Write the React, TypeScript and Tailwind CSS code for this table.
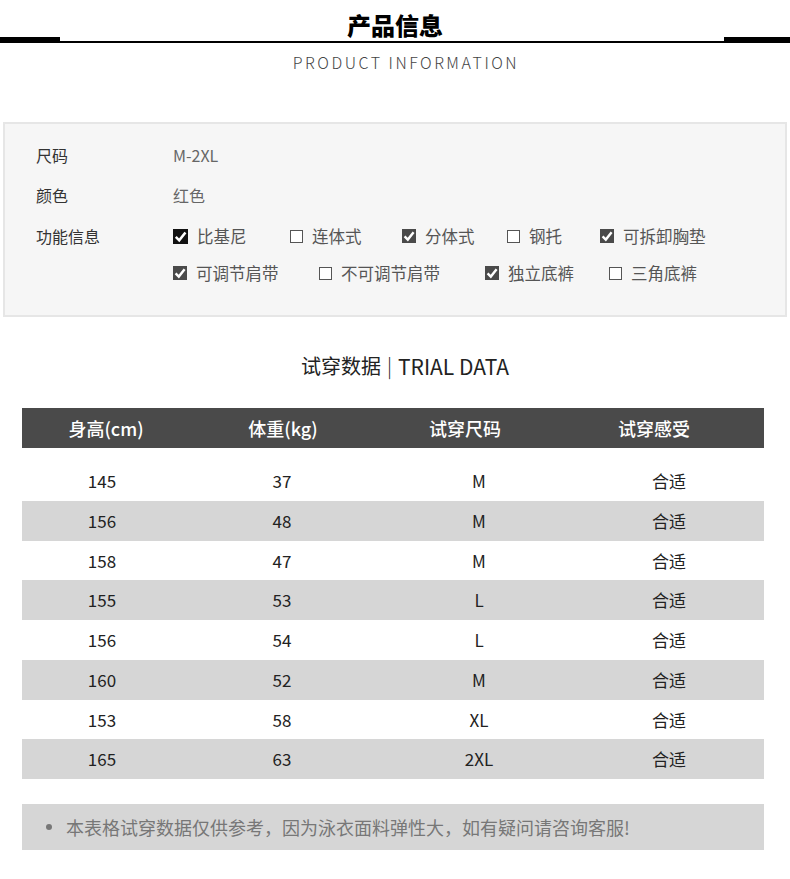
import React from "react";

const font = { fontFamily: '"Noto Sans CJK SC", "Noto Sans", sans-serif' };

type Opt = { label: string; checked: boolean; w: string; dark?: boolean };

const row1: Opt[] = [
  { label: "比基尼", checked: true, w: "w-[117px]", dark: true },
  { label: "连体式", checked: false, w: "w-[112px]" },
  { label: "分体式", checked: true, w: "w-[105px]" },
  { label: "钢托", checked: false, w: "w-[93px]" },
  { label: "可拆卸胸垫", checked: true, w: "w-[120px]" },
];

const row2: Opt[] = [
  { label: "可调节肩带", checked: true, w: "w-[146px]" },
  { label: "不可调节肩带", checked: false, w: "w-[166px]" },
  { label: "独立底裤", checked: true, w: "w-[124px]" },
  { label: "三角底裤", checked: false, w: "w-[110px]" },
];

const rows = [
  ["145", "37", "M", "合适"],
  ["156", "48", "M", "合适"],
  ["158", "47", "M", "合适"],
  ["155", "53", "L", "合适"],
  ["156", "54", "L", "合适"],
  ["160", "52", "M", "合适"],
  ["153", "58", "XL", "合适"],
  ["165", "63", "2XL", "合适"],
];

const Box = ({ checked, dark }: { checked: boolean; dark?: boolean }) =>
  checked ? (
    <svg width={dark ? 15 : 14} height={dark ? 15 : 14} viewBox="0 0 14 14">
      <rect width="14" height="14" fill={dark ? "#111" : "#4a4a4a"} />
      <path d="M2.6 7.4 L5.8 10.6 L11.6 3.2" fill="none" stroke="#fff" strokeWidth="2.4" />
    </svg>
  ) : (
    <span className="block w-[13px] h-[13px] border border-[#555] bg-white" />
  );

const Options = ({ items }: { items: Opt[] }) => (
  <div className="flex items-center h-[24px]">
    {items.map((o) => (
      <div key={o.label} className={`flex items-center shrink-0 ${o.w}`}>
        <Box checked={o.checked} dark={o.dark} />
        <span className="ml-[9px] text-[16.5px] text-[#555] leading-[24px]">{o.label}</span>
      </div>
    ))}
  </div>
);

export default function App() {
  return (
    <div style={font} className="w-[790px] h-[879px] bg-white overflow-hidden">
      <div className="pt-[12px] text-center text-[24px] leading-[25px] font-black text-black">产品信息</div>
      <div className="flex items-end h-[6px]">
        <div className="w-[60px] h-[6px] bg-black" />
        <div className="flex-1 h-[2px] bg-black" />
        <div className="w-[66px] h-[6px] bg-black" />
      </div>
      <div className="mt-[9px] h-[20px] pl-[22px] text-center text-[16px] leading-[20px] tracking-[2.5px] text-[#444] font-light">
        PRODUCT INFORMATION
      </div>

      <div className="mt-[50px] mx-[3px] h-[195px] border-2 border-[#e6e6e6] bg-[#f6f6f6] pt-[19px] pl-[31px] text-[16px] text-[#333]">
        <div className="flex h-[24px] leading-[24px] mb-[16px]">
          <div className="w-[137px]">尺码</div>
          <div className="text-[#666]">M-2XL</div>
        </div>
        <div className="flex h-[24px] leading-[24px] mb-[17px]">
          <div className="w-[137px]">颜色</div>
          <div className="text-[#666]">红色</div>
        </div>
        <div className="flex">
          <div className="w-[137px] leading-[24px]">功能信息</div>
          <div className="flex flex-col gap-[13px]">
            <Options items={row1} />
            <Options items={row2} />
          </div>
        </div>
      </div>

      <div className="mt-[35px] h-[28px] pl-[20px] flex justify-center items-center text-[20px] leading-[28px] text-[#222]">
        试穿数据<span className="mx-[6px] font-light">|</span>
        <span className="text-[21px] leading-[28px]">TRIAL DATA</span>
      </div>

      <div className="mt-[28px] ml-[22px] w-[742px]">
        <div className="grid grid-cols-[168px_186px_178px_210px] h-[40px] items-center bg-[#4a4a4a] text-white text-[18px] font-medium text-center">
          <div>身高(cm)</div>
          <div>体重(kg)</div>
          <div>试穿尺码</div>
          <div className="pr-[10px]">试穿感受</div>
        </div>
        <div className="mt-[13px]">
          {rows.map((r, i) => (
            <div
              key={i}
              className={`grid grid-cols-[160px_200px_194px_188px] h-[39.75px] items-center text-center text-[17px] text-[#222] ${
                i % 2 === 1 ? "bg-[#d6d6d6]" : "bg-white"
              }`}
            >
              {r.map((c, j) => (
                <div key={j} className={j === 3 ? "pr-[2px]" : ""}>
                  {c}
                </div>
              ))}
            </div>
          ))}
        </div>
      </div>

      <div className="mt-[25px] ml-[22px] w-[742px] h-[46px] bg-[#d6d6d6] flex items-center pl-[24px] text-[18px] text-[#777]">
        <span className="w-[6px] h-[6px] rounded-full bg-[#777] mr-[14px]" />
        本表格试穿数据仅供参考，因为泳衣面料弹性大，如有疑问请咨询客服!
      </div>
    </div>
  );
}
